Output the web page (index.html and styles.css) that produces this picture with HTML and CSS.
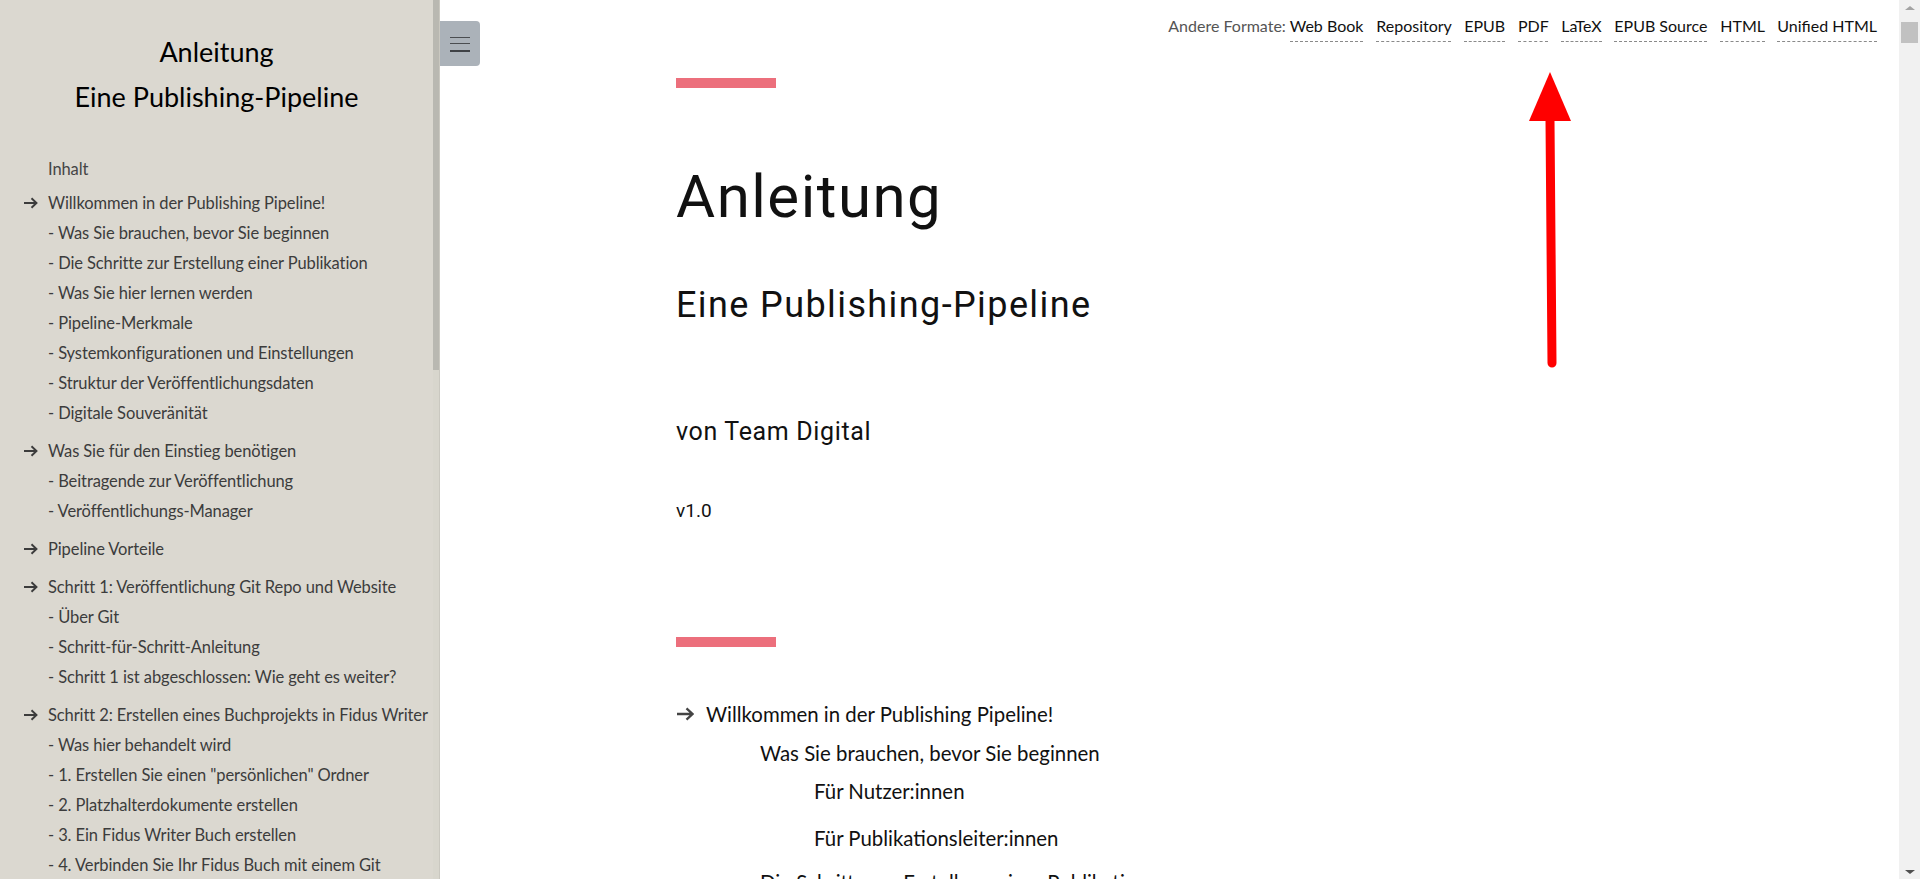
FILE: index.html
```html
<!DOCTYPE html>
<html lang="de">
<head>
<meta charset="utf-8">
<title>Anleitung – Eine Publishing-Pipeline</title>
<link rel="stylesheet" href="styles.css">
</head>
<body>
<div class="app">
  <aside class="sidebar">
    <div class="side-content">
      <header class="side-title">
        <div>Anleitung</div>
        <div>Eine Publishing-Pipeline</div>
      </header>
      <nav class="toc">
        <div class="toc-head">Inhalt</div>
        <div class="group first">
          <div class="row"><span class="lead"><svg class="arr" viewBox="0 0 15 12"><path d="M1 6H13.5M8.5 1.2L13.5 6L8.5 10.8"/></svg></span><span>Willkommen in der Publishing Pipeline!</span></div>
          <div class="row"><span class="lead"></span><span>- Was Sie brauchen, bevor Sie beginnen</span></div>
          <div class="row"><span class="lead"></span><span>- Die Schritte zur Erstellung einer Publikation</span></div>
          <div class="row"><span class="lead"></span><span>- Was Sie hier lernen werden</span></div>
          <div class="row"><span class="lead"></span><span>- Pipeline-Merkmale</span></div>
          <div class="row"><span class="lead"></span><span>- Systemkonfigurationen und Einstellungen</span></div>
          <div class="row"><span class="lead"></span><span>- Struktur der Veröffentlichungsdaten</span></div>
          <div class="row"><span class="lead"></span><span>- Digitale Souveränität</span></div>
        </div>
        <div class="group">
          <div class="row"><span class="lead"><svg class="arr" viewBox="0 0 15 12"><path d="M1 6H13.5M8.5 1.2L13.5 6L8.5 10.8"/></svg></span><span>Was Sie für den Einstieg benötigen</span></div>
          <div class="row"><span class="lead"></span><span>- Beitragende zur Veröffentlichung</span></div>
          <div class="row"><span class="lead"></span><span>- Veröffentlichungs-Manager</span></div>
        </div>
        <div class="group">
          <div class="row"><span class="lead"><svg class="arr" viewBox="0 0 15 12"><path d="M1 6H13.5M8.5 1.2L13.5 6L8.5 10.8"/></svg></span><span>Pipeline Vorteile</span></div>
        </div>
        <div class="group">
          <div class="row"><span class="lead"><svg class="arr" viewBox="0 0 15 12"><path d="M1 6H13.5M8.5 1.2L13.5 6L8.5 10.8"/></svg></span><span>Schritt 1: Veröffentlichung Git Repo und Website</span></div>
          <div class="row"><span class="lead"></span><span>- Über Git</span></div>
          <div class="row"><span class="lead"></span><span>- Schritt-für-Schritt-Anleitung</span></div>
          <div class="row"><span class="lead"></span><span>- Schritt 1 ist abgeschlossen: Wie geht es weiter?</span></div>
        </div>
        <div class="group">
          <div class="row"><span class="lead"><svg class="arr" viewBox="0 0 15 12"><path d="M1 6H13.5M8.5 1.2L13.5 6L8.5 10.8"/></svg></span><span>Schritt 2: Erstellen eines Buchprojekts in Fidus Writer</span></div>
          <div class="row"><span class="lead"></span><span>- Was hier behandelt wird</span></div>
          <div class="row"><span class="lead"></span><span>- 1. Erstellen Sie einen "persönlichen" Ordner</span></div>
          <div class="row"><span class="lead"></span><span>- 2. Platzhalterdokumente erstellen</span></div>
          <div class="row"><span class="lead"></span><span>- 3. Ein Fidus Writer Buch erstellen</span></div>
          <div class="row"><span class="lead"></span><span>- 4. Verbinden Sie Ihr Fidus Buch mit einem Git</span></div>
        </div>
      </nav>
    </div>
    <div class="side-scroll"><div class="side-thumb"></div></div>
  </aside>

  <main class="main">
    <button class="menu-btn" type="button" aria-label="Menü"><span class="ln"></span><span class="ln"></span><span class="ln thick"></span></button>

    <div class="formats">Andere Formate: <a href="#">Web Book</a> <a href="#">Repository</a> <a href="#">EPUB</a> <a href="#">PDF</a> <a href="#">LaTeX</a> <a href="#">EPUB Source</a> <a href="#">HTML</a> <a href="#">Unified HTML</a></div>

    <div class="content">
      <div class="bar first"></div>
      <h1 class="title">Anleitung</h1>
      <h2 class="subtitle">Eine Publishing-Pipeline</h2>
      <p class="author">von Team Digital</p>
      <p class="version">v1.0</p>
      <div class="bar second"></div>

      <div class="mtoc">
        <div class="mrow l1"><svg class="marr" viewBox="0 0 18 14"><path d="M1 7H16.5M10.5 1.3L16.5 7L10.5 12.7"/></svg><span>Willkommen in der Publishing Pipeline!</span></div>
        <div class="mrow l2 a">Was Sie brauchen, bevor Sie beginnen</div>
        <div class="mrow l3 a">Für Nutzer:innen</div>
        <div class="mrow l3 b">Für Publikationsleiter:innen</div>
        <div class="mrow l2 c">Die Schritte zur Erstellung einer Publikation</div>
      </div>
    </div>

    <svg class="annot" viewBox="0 0 50 305" width="50" height="305" aria-hidden="true">
      <polygon points="25,6 4,55 46,55" fill="#ff0000"/>
      <line x1="25" y1="54" x2="27" y2="297" stroke="#ff0000" stroke-width="9" stroke-linecap="round"/>
    </svg>
  </main>

  <div class="page-scroll">
    <div class="sb-btn"><span class="tri up"></span></div>
    <div class="sb-thumb"></div>
    <div class="sb-track"></div>
    <div class="sb-btn"><span class="tri down"></span></div>
  </div>
</div>
</body>
</html>
```

FILE: styles.css
```css
html, body {
  margin: 0;
  padding: 0;
  height: 100%;
  overflow: hidden;
}

body {
  font-family: Lato, "Noto Sans", sans-serif;
  background: #ffffff;
  color: #111;
}

.app {
  display: flex;
  height: 100vh;
}

/* ---------- Sidebar ---------- */
.sidebar {
  width: 440px;
  flex: none;
  display: flex;
  background: #dbd8d0;
  overflow: hidden;
}

.side-content {
  width: 433px;
  flex: none;
  padding-top: 28.5px;
}

.side-title {
  text-align: center;
  font-size: 27px;
  line-height: 45px;
  color: #000;
}

.toc {
  margin-top: 35px;
  font-size: 16.5px;
  letter-spacing: -0.1px;
  line-height: 30px;
  color: #3c3c3c;
}

.toc-head {
  padding-left: 48px;
  color: #454545;
}

.group {
  margin-top: 8px;
}

.group.first {
  margin-top: 4.3px;
}

.row {
  display: flex;
  align-items: center;
  height: 30px;
  white-space: nowrap;
}

.lead {
  width: 48px;
  flex: none;
  box-sizing: border-box;
  padding-left: 23px;
  display: flex;
  align-items: center;
}

.arr {
  width: 15px;
  height: 12px;
  fill: none;
  stroke: #3c3c3c;
  stroke-width: 1.9;
}

.side-scroll {
  width: 7px;
  flex: none;
  background: #d8d6cd;
  border-right: 1px solid #cac8c0;
  box-sizing: border-box;
}

.side-thumb {
  height: 370px;
  background: #b9b8b1;
}

/* ---------- Main ---------- */
.main {
  flex: 1;
  position: relative;
  overflow: hidden;
  background: #fff;
}

.menu-btn {
  position: absolute;
  left: 0;
  top: 21px;
  width: 40px;
  height: 45px;
  border: 0;
  padding: 0;
  background: #abb2b9;
  border-radius: 0 4px 4px 0;
  display: flex;
  flex-direction: column;
  align-items: center;
}

.menu-btn .ln {
  display: block;
  width: 20px;
  height: 1px;
  background: #4a4d50;
  margin-top: 5px;
}

.menu-btn .ln:first-child {
  margin-top: 16px;
}

.menu-btn .ln.thick {
  height: 2px;
  margin-top: 6px;
  background: #3f4246;
}

.formats {
  text-align: right;
  padding: 16px 22px 0 0;
  font-size: 16px;
  line-height: 20px;
  color: #555;
  white-space: nowrap;
}

.formats a {
  color: #111;
  text-decoration: none;
  border-bottom: 1px dashed #8a8a8a;
  padding-bottom: 6px;
}

.formats a + a {
  margin-left: 8.7px;
}

.content {
  padding-left: 236px;
}

.bar {
  width: 100px;
  height: 10px;
  background: #ec6f7c;
}

.bar.first {
  margin-top: 42px;
}

.title {
  font-family: Roboto, "Noto Sans", sans-serif;
  font-weight: 400;
  font-size: 60px;
  letter-spacing: 1.5px;
  line-height: 70px;
  margin: 73.5px 0 0;
  color: #111;
}

.subtitle {
  font-family: Roboto, "Noto Sans", sans-serif;
  font-weight: 400;
  font-size: 36px;
  letter-spacing: 1.4px;
  line-height: 42px;
  margin: 52.5px 0 0;
  color: #111;
}

.author {
  font-family: Roboto, "Noto Sans", sans-serif;
  font-size: 25px;
  letter-spacing: 0.65px;
  line-height: 30px;
  margin: 90.5px 0 0;
  color: #111;
}

.version {
  font-family: Roboto, "Noto Sans", sans-serif;
  font-size: 19px;
  line-height: 24px;
  margin: 52px 0 0;
  color: #111;
}

.bar.second {
  margin-top: 114.5px;
}

.mtoc {
  margin-top: 52px;
  font-size: 20.4px;
  line-height: 30px;
  color: #111;
}

.mrow {
  height: 30px;
  white-space: nowrap;
}

.mrow.l1 {
  display: flex;
  align-items: center;
}

.marr {
  width: 18px;
  height: 14px;
  margin-right: 12px;
  fill: none;
  stroke: #444;
  stroke-width: 2.3;
}

.mrow.l2 {
  padding-left: 84px;
}

.mrow.l3 {
  padding-left: 138px;
}

.mrow.a {
  margin-top: 8.5px;
}

.mrow.b {
  margin-top: 17px;
}

.mrow.c {
  margin-top: 14px;
}

.annot {
  position: absolute;
  left: 1085px;
  top: 66px;
}

/* ---------- Page scrollbar ---------- */
.page-scroll {
  width: 21px;
  flex: none;
  background: #f1f1f1;
  display: flex;
  flex-direction: column;
  align-items: center;
}

.sb-btn {
  width: 21px;
  height: 21px;
  display: flex;
  align-items: center;
  justify-content: center;
}

.tri {
  width: 0;
  height: 0;
  border-left: 5px solid transparent;
  border-right: 5px solid transparent;
}

.tri.up {
  border-bottom: 4px solid #a3a3a3;
  margin-top: -6px;
}

.tri.down {
  border-top: 4px solid #505050;
  margin-top: 6px;
}

.sb-thumb {
  width: 17px;
  height: 21px;
  margin-top: 1px;
  background: #c1c1c1;
}

.sb-track {
  flex: 1;
}
```
